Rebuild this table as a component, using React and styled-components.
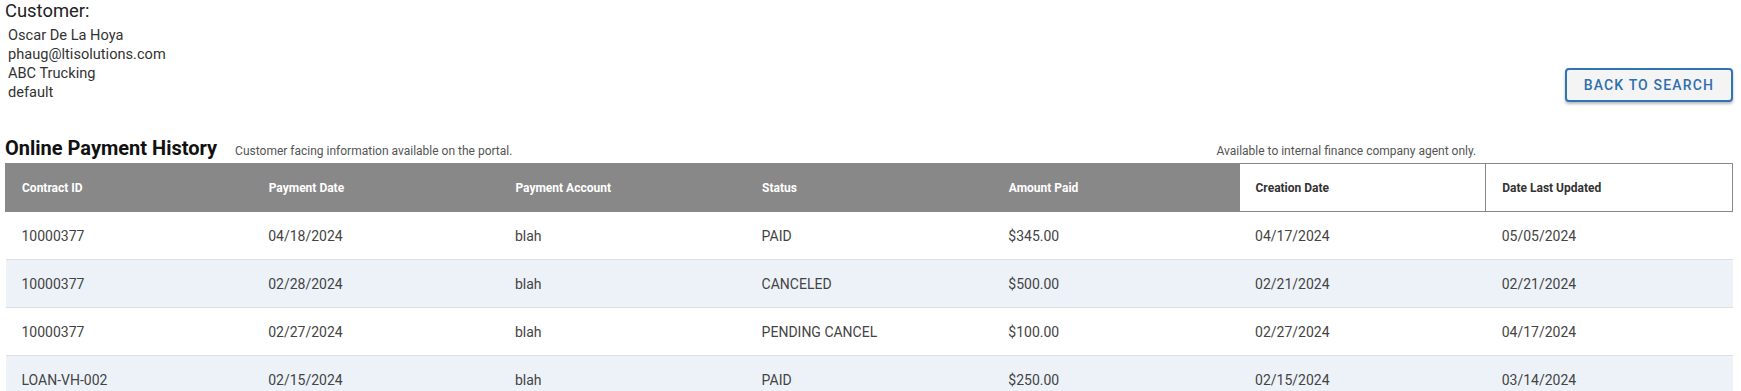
import React from "react";
import styled, { createGlobalStyle } from "styled-components";

const Global = createGlobalStyle`
  html, body { margin: 0; padding: 0; background: #fff; }
  body { font-family: Roboto, "Noto Sans", Arial, sans-serif; color: #333; }
  * { box-sizing: border-box; }
`;

const Page = styled.div`
  padding: 0 8px 0 5px;
`;

const TopBar = styled.div`
  display: flex;
  justify-content: space-between;
  align-items: flex-end;
`;

const CustomerBlock = styled.div`
  display: flex;
  flex-direction: column;
`;

const CustomerLabel = styled.div`
  font-size: 18.4px;
  line-height: 22px;
  color: #222;
`;

const CustomerLines = styled.div`
  padding: 4px 0 0 3px;
  display: flex;
  flex-direction: column;
`;

const CustomerLine = styled.div`
  font-size: 14.6px;
  line-height: 19px;
  color: #333;
`;

const BackButton = styled.button`
  height: 34px;
  padding: 0 17px;
  margin-bottom: 0;
  border: 2px solid #2f74b5;
  border-radius: 4px;
  background: #f4f4f4;
  color: #2f6fae;
  font-family: Roboto, Arial, sans-serif;
  font-size: 14px;
  font-weight: 500;
  letter-spacing: 1.15px;
  text-transform: uppercase;
  box-shadow: 0 2px 3px rgba(0, 0, 0, 0.28);
  cursor: pointer;
`;

const TitleRow = styled.div`
  display: flex;
  align-items: baseline;
  margin-top: 35px;
  margin-bottom: 3px;
`;

const Title = styled.h2`
  margin: 0;
  font-size: 20px;
  line-height: 23px;
  font-weight: 700;
  color: #111;
`;

const Note = styled.span`
  font-size: 12px;
  color: #555;
  margin-left: ${(p) => (p.$lead ? "18px" : "0")};
  margin-right: ${(p) => (p.$trail ? "calc(100% / 7 + 10px)" : "0")};
  white-space: nowrap;
`;

const Spacer = styled.div`
  flex: 1;
`;

const Table = styled.table`
  width: 100%;
  border-collapse: collapse;
  table-layout: fixed;
`;

const HeadCell = styled.th`
  height: 48px;
  padding: 0 16px;
  text-align: left;
  font-size: 12px;
  font-weight: 700;
  border: 1px solid #888;
  background: ${(p) => (p.$internal ? "#fff" : "#888")};
  color: ${(p) => (p.$internal ? "#333" : "#fff")};
`;

const Row = styled.tr`
  background: ${(p) => (p.$alt ? "#edf2f9" : "#fff")};
  border-bottom: 1px solid #dcdfe3;
`;

const Cell = styled.td`
  height: 48px;
  padding: 0 16px;
  font-size: 14px;
  color: #444;
`;

const columns = [
  { label: "Contract ID" },
  { label: "Payment Date" },
  { label: "Payment Account" },
  { label: "Status" },
  { label: "Amount Paid" },
  { label: "Creation Date", internal: true },
  { label: "Date Last Updated", internal: true },
];

const rows = [
  ["10000377", "04/18/2024", "blah", "PAID", "$345.00", "04/17/2024", "05/05/2024"],
  ["10000377", "02/28/2024", "blah", "CANCELED", "$500.00", "02/21/2024", "02/21/2024"],
  ["10000377", "02/27/2024", "blah", "PENDING CANCEL", "$100.00", "02/27/2024", "04/17/2024"],
  ["LOAN-VH-002", "02/15/2024", "blah", "PAID", "$250.00", "02/15/2024", "03/14/2024"],
];

export default function App() {
  return (
    <Page>
      <Global />
      <TopBar>
        <CustomerBlock>
          <CustomerLabel>Customer:</CustomerLabel>
          <CustomerLines>
            <CustomerLine>Oscar De La Hoya</CustomerLine>
            <CustomerLine>phaug@ltisolutions.com</CustomerLine>
            <CustomerLine>ABC Trucking</CustomerLine>
            <CustomerLine>default</CustomerLine>
          </CustomerLines>
        </CustomerBlock>
        <BackButton>Back to Search</BackButton>
      </TopBar>
      <TitleRow>
        <Title>Online Payment History</Title>
        <Note $lead>Customer facing information available on the portal.</Note>
        <Spacer />
        <Note $trail>Available to internal finance company agent only.</Note>
      </TitleRow>
      <Table>
        <thead>
          <tr>
            {columns.map((c) => (
              <HeadCell key={c.label} $internal={c.internal}>
                {c.label}
              </HeadCell>
            ))}
          </tr>
        </thead>
        <tbody>
          {rows.map((r, i) => (
            <Row key={i} $alt={i % 2 === 1}>
              {r.map((v, j) => (
                <Cell key={j}>{v}</Cell>
              ))}
            </Row>
          ))}
        </tbody>
      </Table>
    </Page>
  );
}
